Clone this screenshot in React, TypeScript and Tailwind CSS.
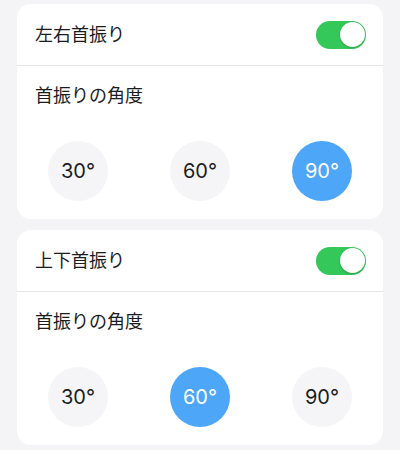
import { useState } from "react";

const angles = [30, 60, 90];

function Toggle({ on, onChange }: { on: boolean; onChange: () => void }) {
  return (
    <button
      onClick={onChange}
      className={`relative h-[28px] w-[50px] rounded-full transition-colors ${on ? "bg-[#34c759]" : "bg-[#e5e5ea]"}`}
    >
      <span
        className={`absolute top-[1.5px] h-[25px] w-[25px] rounded-full bg-white shadow-[0_1px_2px_rgba(0,0,0,0.2)] ${on ? "left-[23.5px]" : "left-[1.5px]"}`}
      />
    </button>
  );
}

function SwingCard({ title, initial }: { title: string; initial: number }) {
  const [on, setOn] = useState(true);
  const [angle, setAngle] = useState(initial);

  return (
    <div className="rounded-[14px] bg-white">
      {/* Tiêu đề + công tắc */}
      <div className="flex h-[62px] items-center justify-between pl-[18px] pr-[17px] border-b border-[#e5e5ea]">
        <span className="text-[18px] text-[#1c1c1e]">{title}</span>
        <Toggle on={on} onChange={() => setOn(!on)} />
      </div>

      <div className="pt-[17px] pb-[18px]">
        <div className="pl-[18px] text-[18px] leading-[26px] text-[#1c1c1e]">首振りの角度</div>
        <div className="mt-[32px] flex justify-between px-[31px]">
          {angles.map((a) => (
            <button
              key={a}
              onClick={() => setAngle(a)}
              className={`flex h-[60px] w-[60px] items-center justify-center rounded-full text-[20px] ${
                angle === a ? "bg-[#4da6f7] text-white" : "bg-[#f5f5f7] text-[#1c1c1e]"
              }`}
            >
              {a}°
            </button>
          ))}
        </div>
      </div>
    </div>
  );
}

export default function App() {
  return (
    <div
      className="min-h-[450px] bg-[#f4f4f6] px-[17px] pt-[4px] flex flex-col gap-[11px]"
      style={{ fontFamily: '"Inter", "Noto Sans CJK JP", sans-serif' }}
    >
      <SwingCard title="左右首振り" initial={90} />
      <SwingCard title="上下首振り" initial={60} />
    </div>
  );
}
